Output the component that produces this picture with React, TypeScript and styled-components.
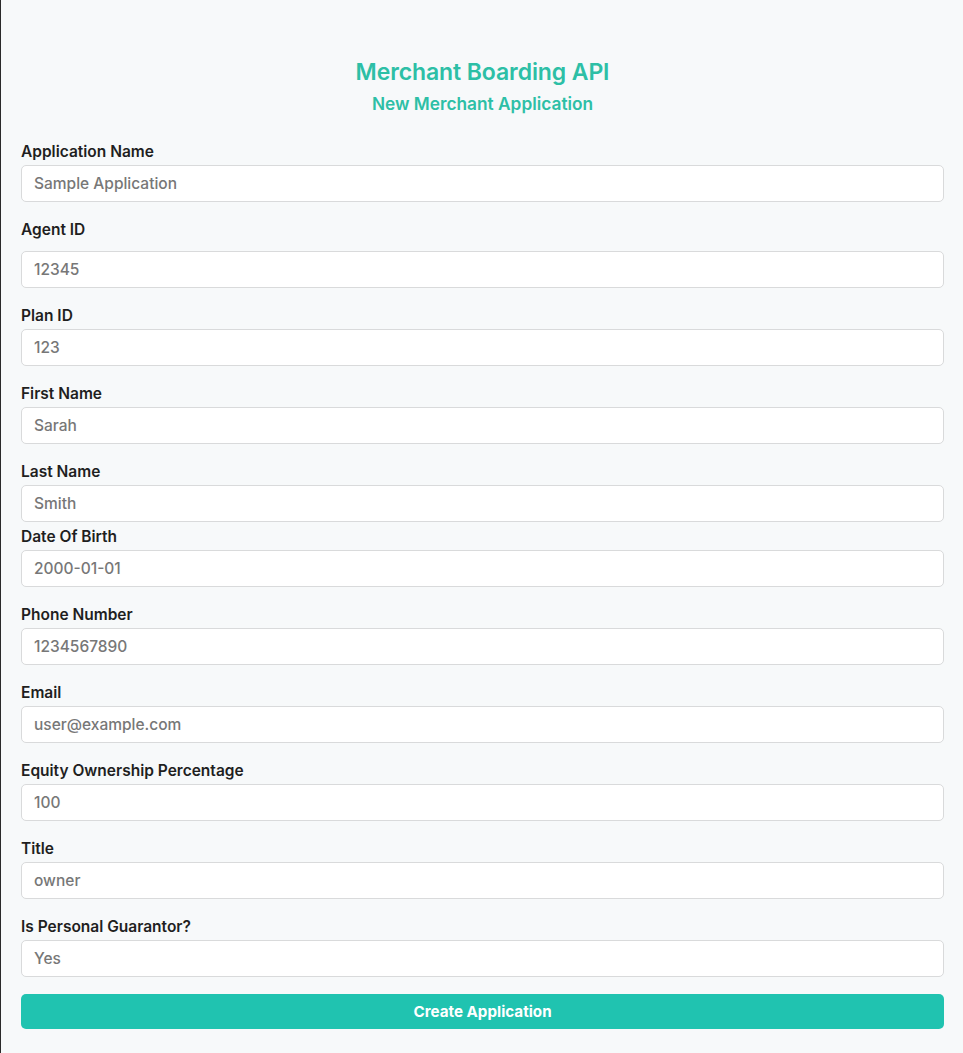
import React from "react";
import styled, { createGlobalStyle } from "styled-components";

const Global = createGlobalStyle`
  html, body { margin: 0; padding: 0; background: #f7f9fa; }
  body { font-family: Inter, "Open Sans", sans-serif; }
  * { box-sizing: border-box; }
`;

const Page = styled.div`
  min-height: 1053px;
  border-left: 1px solid #2a2a2a;
  background: #f7f9fa;
  padding: 57px 19px 24px 20px;
`;

const Header = styled.header`
  display: flex;
  flex-direction: column;
  align-items: center;
  gap: 5px;
  margin-bottom: 26px;
`;

const Title = styled.h1`
  margin: 0;
  font-size: 23px;
  line-height: 30px;
  font-weight: 600;
  color: #2dbfa6;
  letter-spacing: -0.1px;
`;

const Subtitle = styled.h2`
  margin: 0;
  font-size: 17.3px;
  line-height: 24px;
  font-weight: 600;
  color: #2dbfa6;
`;

const Form = styled.form`
  display: flex;
  flex-direction: column;
`;

const Field = styled.div<{ $tight?: boolean }>`
  display: flex;
  flex-direction: column;
  margin-bottom: ${(p) => (p.$tight ? 5 : 18)}px;
`;

const Label = styled.label<{ $extra?: boolean }>`
  font-size: 15.5px;
  line-height: 20px;
  font-weight: 600;
  color: #1f1f1f;
  margin-bottom: ${(p) => (p.$extra ? 11 : 3)}px;
`;

const Input = styled.input`
  height: 37px;
  width: 100%;
  border: 1px solid #d9dadb;
  border-radius: 5px;
  background: #fff;
  padding: 0 12px;
  font-family: inherit;
  font-size: 15.5px;
  font-weight: 500;
  color: #777;
  outline: none;
  &::placeholder { color: #777; }
`;

const Button = styled.button`
  margin-top: -1px;
  height: 35px;
  width: 100%;
  border: none;
  border-radius: 5px;
  background: #20c3b0;
  color: #fff;
  font-family: inherit;
  font-size: 15.2px;
  font-weight: 700;
  cursor: pointer;
`;

const fields: { label: string; value: string; extra?: boolean; tight?: boolean }[] = [
  { label: "Application Name", value: "Sample Application" },
  { label: "Agent ID", value: "12345", extra: true },
  { label: "Plan ID", value: "123" },
  { label: "First Name", value: "Sarah" },
  { label: "Last Name", value: "Smith", tight: true },
  { label: "Date Of Birth", value: "2000-01-01" },
  { label: "Phone Number", value: "1234567890" },
  { label: "Email", value: "user@example.com" },
  { label: "Equity Ownership Percentage", value: "100" },
  { label: "Title", value: "owner" },
  { label: "Is Personal Guarantor?", value: "Yes" },
];

export default function App() {
  return (
    <>
      <Global />
      <Page>
        <Header>
          <Title>Merchant Boarding API</Title>
          <Subtitle>New Merchant Application</Subtitle>
        </Header>
        <Form onSubmit={(e) => e.preventDefault()}>
          {fields.map((f) => (
            <Field key={f.label} $tight={f.tight}>
              <Label $extra={f.extra}>{f.label}</Label>
              <Input placeholder={f.value} />
            </Field>
          ))}
          <Button type="submit">Create Application</Button>
        </Form>
      </Page>
    </>
  );
}
